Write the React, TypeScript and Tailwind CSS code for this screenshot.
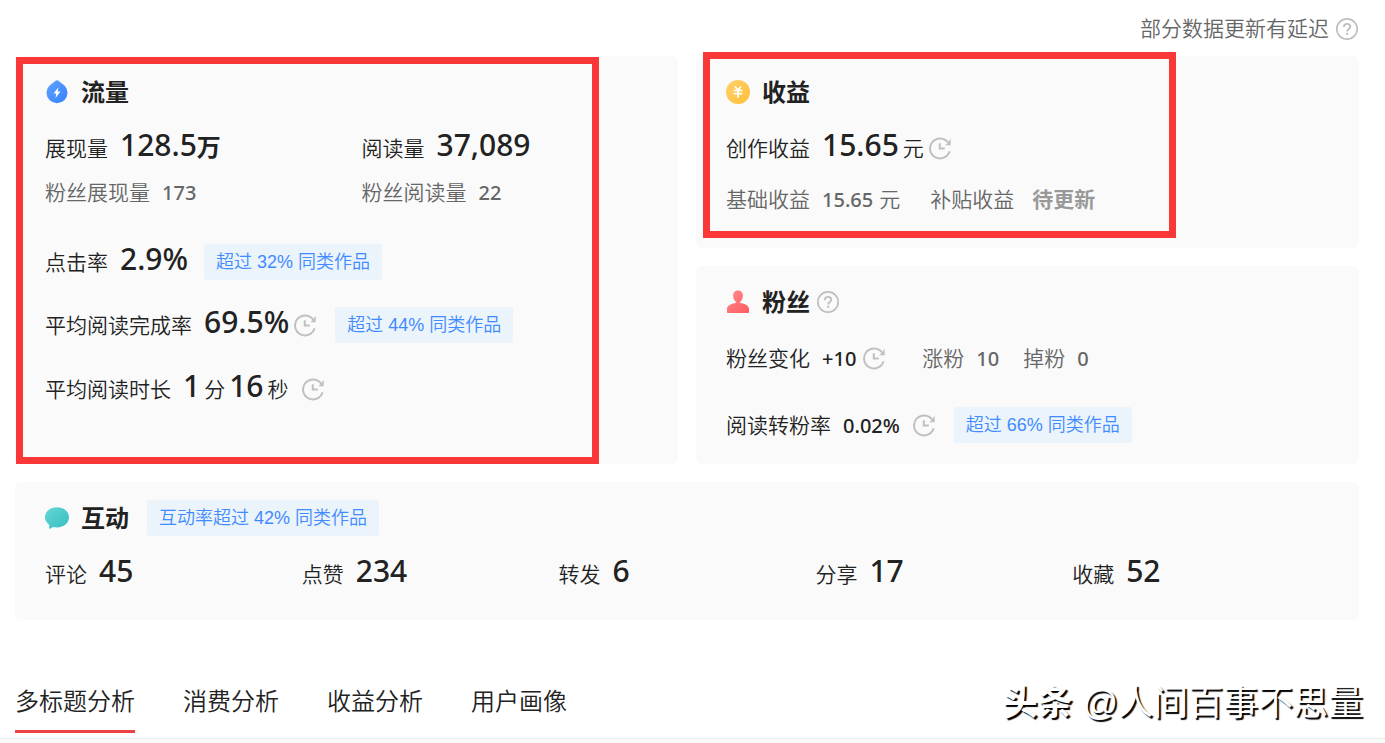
import type { ReactNode } from "react";

const BIG = "font-['Noto_Sans','Noto_Sans_CJK_SC',sans-serif] text-[30px] leading-7 font-[550] text-[#222]";
const SMALL = "font-['Noto_Sans','Noto_Sans_CJK_SC',sans-serif] text-xl leading-7 font-medium";

function HelpButton({ label }: { label: string }) {
  return (
    <button type="button" aria-label={label} className="size-6 shrink-0 self-center text-[#bfbfbf]">
      <svg viewBox="0 0 24 24" className="size-6" fill="none" stroke="currentColor" strokeWidth="1.7">
        <circle cx="12" cy="12" r="10.2" />
        <path d="M8.9 9.9c0-1.9 1.4-3 3.2-3s3.1 1.1 3.1 2.8c0 2.2-3 2.2-3 4.7" strokeWidth="1.9" />
        <path d="M11.1 15.8h2.1v2h-2.1z" fill="currentColor" stroke="none" />
      </svg>
    </button>
  );
}

function ClockIcon() {
  return (
    <svg viewBox="0 0 24 24" className="size-6 shrink-0 self-center text-[#c0c0c0]" fill="none" stroke="currentColor" aria-hidden="true">
      <path d="M20.300 6.800A10 10 0 1 0 21.600 15.200" strokeWidth="2" />
      <path d="M22.700 2.600v6.600h-5.600l3-2.400z" fill="currentColor" stroke="none" />
      <path d="M11.800 7.300v5.200h5" strokeWidth="2" />
    </svg>
  );
}

function FlowIcon() {
  return (
    <svg viewBox="0 0 24 24" className="size-6" aria-hidden="true">
      <defs>
        <linearGradient id="flow" x1="0" y1="0" x2="1" y2="1">
          <stop offset="0" stopColor="#62a3ff" />
          <stop offset="1" stopColor="#3480ff" />
        </linearGradient>
      </defs>
      <path d="M12 .3c.7 0 1.300.3 2 .9l5.700 4.500a10.500 10.500 0 1 1-15.400 0L10 1.200c.7-.6 1.300-.9 2-.9z" fill="url(#flow)" />
      <path d="M13.500 7.200 8.500 13.400h2.700l-.7 4.500 5-6.400h-2.900z" fill="#fff" />
    </svg>
  );
}

function CoinIcon() {
  return (
    <svg viewBox="0 0 24 24" className="size-6" aria-hidden="true">
      <defs>
        <linearGradient id="coin" x1="0" y1="0" x2="1" y2="1">
          <stop offset="0" stopColor="#ffd06a" />
          <stop offset="1" stopColor="#ffbf38" />
        </linearGradient>
      </defs>
      <circle cx="12" cy="12" r="12" fill="url(#coin)" />
      <path d="M9 6.500l3 3.600 3-3.600M7.600 10.500h8.800M7.600 13.600h8.800M12 10v7.800" stroke="#fff" strokeWidth="1.700" fill="none" />
    </svg>
  );
}

function FansIcon() {
  return (
    <svg viewBox="0 0 24 24" className="size-6" aria-hidden="true">
      <defs>
        <linearGradient id="fans" x1="0" y1="0" x2="1" y2="1">
          <stop offset="0" stopColor="#ff8d8d" />
          <stop offset="1" stopColor="#ff5a5f" />
        </linearGradient>
      </defs>
      <path d="M12 .4c2.900 0 4.900 2 4.900 5 0 3.300-1.700 5.600-2.900 6.500-.4.300-.3.900.3 1 4.500.6 8.700 2.400 8.700 6.100v3c0 .6-.4 1-1 1H2c-.6 0-1-.4-1-1v-3c0-3.700 4.200-5.500 8.700-6.100.6-.1.700-.7.300-1-1.200-.9-2.900-3.200-2.900-6.500 0-3 2-5 4.900-5z" fill="url(#fans)" />
    </svg>
  );
}

function ChatIcon() {
  return (
    <svg viewBox="0 0 24 24" className="size-6" aria-hidden="true">
      <defs>
        <linearGradient id="chat" x1="0" y1="0" x2="1" y2="1">
          <stop offset="0" stopColor="#66d6d6" />
          <stop offset="1" stopColor="#35bfc0" />
        </linearGradient>
      </defs>
      <path d="M12 1.200c6.600 0 12 4.300 12 10.100s-5.400 10.100-12 10.100c-1.300 0-2.600-.2-3.800-.5l-3.400 1.900c-.5.200-.9-.1-.8-.6l.4-3.300C1.700 17.100 0 14.400 0 11.300 0 5.500 5.400 1.200 12 1.200z" fill="url(#chat)" />
    </svg>
  );
}

function Title({ icon, children }: { icon: ReactNode; children: ReactNode }) {
  return (
    <div className="flex h-9 items-center gap-3">
      {icon}
      <h2 className="pb-0.5 text-2xl leading-9 font-bold">{children}</h2>
    </div>
  );
}

function Tag({ children }: { children: ReactNode }) {
  return (
    <span className="self-center rounded-xs bg-[#ebf3fb] px-3 font-['Liberation_Sans','Noto_Sans_CJK_SC',sans-serif] text-lg leading-9 font-[350] whitespace-nowrap text-[#3f8bff]">
      {children}
    </span>
  );
}

function Row({ className = "", children }: { className?: string; children: ReactNode }) {
  return <div className={`flex h-9 items-baseline leading-[34px] whitespace-nowrap ${className}`}>{children}</div>;
}

const interactions = [
  ["评论", "45"],
  ["点赞", "234"],
  ["转发", "6"],
  ["分享", "17"],
  ["收藏", "52"],
];

const tabs = ["多标题分析", "消费分析", "收益分析", "用户画像"];

export default function App() {
  return (
    <div className="relative min-h-screen bg-white font-['Noto_Sans_CJK_SC',sans-serif] text-[21px] leading-9 font-[350] text-[#222]">
      <div className="pr-[26px] pl-[15px]">
        <header className="flex h-14 items-center justify-end gap-1.5 pt-0.5 text-[#666]">
          <span className="pb-1">部分数据更新有延迟</span>
          <HelpButton label="数据更新说明" />
        </header>

        <main className="grid grid-cols-2 gap-[18px]">
          <section className="relative row-span-2 rounded-md bg-[#fafafa] px-[30px] py-[18px]">
            <Title icon={<FlowIcon />}>流量</Title>
            <div className="mt-5 grid grid-cols-2 gap-x-[30px] gap-y-2">
              <Row className="gap-3">
                <span>展现量</span>
                <span className={BIG}>128.5<span className="text-2xl leading-7 font-bold">万</span></span>
              </Row>
              <Row className="gap-3">
                <span>阅读量</span>
                <span className={BIG}>37,089</span>
              </Row>
              <Row className="gap-3 text-[#666]">
                <span>粉丝展现量</span>
                <span className={SMALL}>173</span>
              </Row>
              <Row className="gap-3 text-[#666]">
                <span>粉丝阅读量</span>
                <span className={SMALL}>22</span>
              </Row>
            </div>
            <Row className="mt-[34px]">
              <span>点击率</span>
              <span className={`${BIG} mr-4 ml-3`}>2.9%</span>
              <Tag>超过 32% 同类作品</Tag>
            </Row>
            <Row className="mt-[27px]">
              <span>平均阅读完成率</span>
              <span className={`${BIG} mr-1 ml-3`}>69.5%</span>
              <ClockIcon />
              <span className="ml-[18px] flex self-center"><Tag>超过 44% 同类作品</Tag></span>
            </Row>
            <Row className="mt-7 gap-1">
              <span className="mr-2">平均阅读时长</span>
              <span className={BIG}>1</span>
              <span>分</span>
              <span className={BIG}>16</span>
              <span className="mr-2">秒</span>
              <ClockIcon />
            </Row>
            <div className="pointer-events-none absolute top-px left-px h-[407px] w-[583px] border-7 border-[#fb3838]" />
          </section>

          <section className="relative h-48 rounded-md bg-[#fafafa] px-[30px] py-[18px]">
            <Title icon={<CoinIcon />}>收益</Title>
            <Row className="mt-5 gap-1">
              <span className="mr-2">创作收益</span>
              <span className={BIG}>15.65</span>
              <span>元</span>
              <ClockIcon />
            </Row>
            <Row className="mt-[15px] gap-1.5 text-[#666]">
              <span className="mr-1.5">基础收益</span>
              <span className={SMALL}>15.65</span>
              <span className="mr-6">元</span>
              <span className="mr-3">补贴收益</span>
              <span className="font-bold text-[#999]">待更新</span>
            </Row>
            <div className="pointer-events-none absolute -top-1 left-[7px] h-[186px] w-[473px] border-7 border-[#fb3838]" />
          </section>

          <section className="h-[198px] rounded-md bg-[#fafafa] px-[30px] py-[18px]">
            <div className="flex gap-1.5">
              <Title icon={<FansIcon />}>粉丝</Title>
              <HelpButton label="粉丝数据说明" />
            </div>
            <Row className="mt-5">
              <span>粉丝变化</span>
              <span className={`${SMALL} mr-1.5 ml-3`}>+10</span>
              <ClockIcon />
              <span className="ml-9 text-[#666]">涨粉</span>
              <span className={`${SMALL} ml-3 text-[#666]`}>10</span>
              <span className="ml-6 text-[#666]">掉粉</span>
              <span className={`${SMALL} ml-3 text-[#666]`}>0</span>
            </Row>
            <Row className="mt-[31px]">
              <span>阅读转粉率</span>
              <span className={`${SMALL} mr-3 ml-3`}>0.02%</span>
              <ClockIcon />
              <span className="ml-[18px] flex self-center"><Tag>超过 66% 同类作品</Tag></span>
            </Row>
          </section>

          <section className="col-span-2 h-[138px] rounded-md bg-[#fafafa] px-[30px] py-[18px]">
            <div className="flex gap-[18px]">
              <Title icon={<ChatIcon />}>互动</Title>
              <Tag>互动率超过 42% 同类作品</Tag>
            </div>
            <div className="mt-5 grid grid-cols-5">
              {interactions.map(([name, value]) => (
                <Row key={name} className="gap-3">
                  <span>{name}</span>
                  <span className={BIG}>{value}</span>
                </Row>
              ))}
            </div>
          </section>
        </main>
      </div>

      <nav className="mt-[60px] flex gap-12 border-b border-[#ececec] px-[15px] pb-[5px]">
        {tabs.map((tab, i) => (
          <button
            key={tab}
            type="button"
            className={`border-b-3 pt-0.5 pb-3 text-2xl leading-9 ${i === 0 ? "border-[#f04142]" : "border-transparent"}`}
          >
            {tab}
          </button>
        ))}
      </nav>
      <div className="h-1 bg-[#fafafa]" />

      <div className="pointer-events-none absolute right-[22px] bottom-3.5 flex gap-2.5 text-[35px] leading-[52px] whitespace-nowrap text-white [text-shadow:2px_2px_1px_#000]">
        <span className="font-bold">头条</span>
        <span className="font-normal"><span className="font-['Liberation_Sans',sans-serif]">@</span>人间百事不思量</span>
      </div>
    </div>
  );
}
